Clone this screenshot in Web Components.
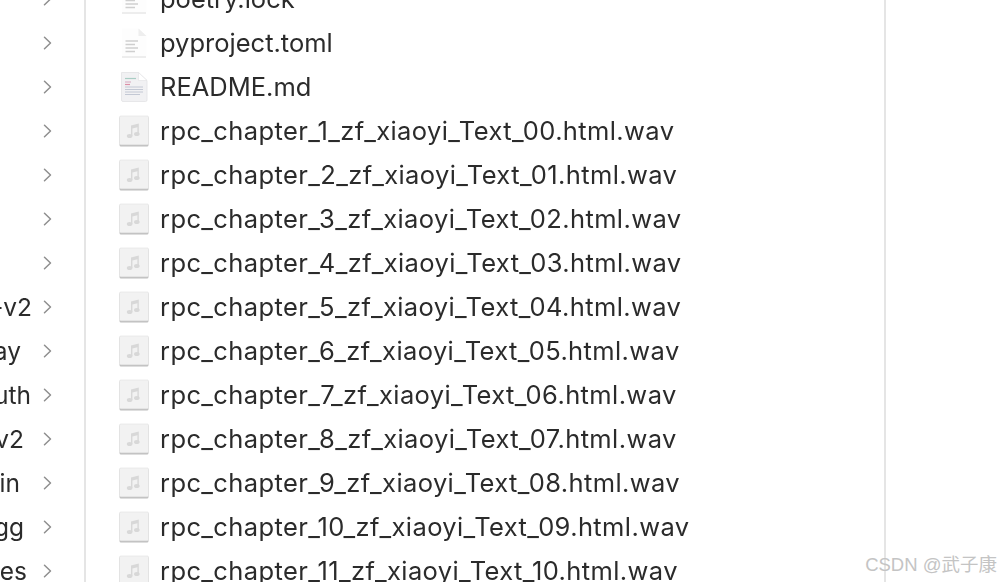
<!DOCTYPE html>
<html>
<head>
<meta charset="utf-8">
<title>Finder</title>
<style>
html,body{margin:0;padding:0;height:100%;background:#fff;overflow:hidden;}
</style>
</head>
<body>
<finder-window>
  <finder-column slot="left">
    <side-row></side-row><side-row></side-row><side-row></side-row><side-row></side-row>
    <side-row></side-row><side-row></side-row><side-row></side-row>
    <side-row label="-v2" end="32"></side-row>
    <side-row label="ay" end="21"></side-row>
    <side-row label="uth" end="31"></side-row>
    <side-row label="v2" end="24"></side-row>
    <side-row label="in" end="20"></side-row>
    <side-row label="gg" end="24"></side-row>
    <side-row label="es" end="27"></side-row>
  </finder-column>
  <finder-column slot="middle">
    <file-row icon="doc">poetry.lock</file-row>
    <file-row icon="doc">pyproject.toml</file-row>
    <file-row icon="readme">README.md</file-row>
    <file-row icon="audio">rpc_chapter_1_zf_xiaoyi_Text_00.html.wav</file-row>
    <file-row icon="audio">rpc_chapter_2_zf_xiaoyi_Text_01.html.wav</file-row>
    <file-row icon="audio">rpc_chapter_3_zf_xiaoyi_Text_02.html.wav</file-row>
    <file-row icon="audio">rpc_chapter_4_zf_xiaoyi_Text_03.html.wav</file-row>
    <file-row icon="audio">rpc_chapter_5_zf_xiaoyi_Text_04.html.wav</file-row>
    <file-row icon="audio">rpc_chapter_6_zf_xiaoyi_Text_05.html.wav</file-row>
    <file-row icon="audio">rpc_chapter_7_zf_xiaoyi_Text_06.html.wav</file-row>
    <file-row icon="audio">rpc_chapter_8_zf_xiaoyi_Text_07.html.wav</file-row>
    <file-row icon="audio">rpc_chapter_9_zf_xiaoyi_Text_08.html.wav</file-row>
    <file-row icon="audio">rpc_chapter_10_zf_xiaoyi_Text_09.html.wav</file-row>
    <file-row icon="audio">rpc_chapter_11_zf_xiaoyi_Text_10.html.wav</file-row>
  </finder-column>
  <finder-column slot="right"></finder-column>
  <water-mark slot="overlay">CSDN @武子康</water-mark>
</finder-window>

<script>
class FinderWindow extends HTMLElement {
    constructor() {
        super();
        this.attachShadow({mode: 'open'}).innerHTML = `<style>
:host{display:grid;grid-template-columns:86px 800px 1fr;position:relative;width:1000px;height:582px;overflow:hidden;
  background:#fff;color:#2b2b2b;font-family:Inter,"Liberation Sans","Noto Sans CJK SC",sans-serif;}
.col{min-width:0;box-sizing:border-box;border-right:2px solid #e5e5e5;}
.col.last{border:0;}
</style>
<div class="col"><slot name="left"></slot></div>
<div class="col"><slot name="middle"></slot></div>
<div class="col last"><slot name="right"></slot></div>
<slot name="overlay"></slot>`;
    }
}

class FinderColumn extends HTMLElement {
    constructor() {
        super();
        this.attachShadow({mode: 'open'}).innerHTML = `<style>
:host{display:flex;flex-direction:column;margin-top:-23px;}
</style><slot></slot>`;
    }
}

class SideRow extends HTMLElement {
    connectedCallback() {
        let label = this.getAttribute('label') || '';
        let end = this.getAttribute('end') || 0;
        this.attachShadow({mode: 'open'}).innerHTML = `<style>
:host{display:block;height:44px;position:relative;overflow:hidden;}
.t{position:absolute;right:calc(100% - ${end}px);top:0;line-height:44px;font-size:24.5px;white-space:nowrap;filter:blur(.25px);}
svg{position:absolute;left:43px;top:15px;}
</style>
<span class="t">${label}</span>
<svg width="9" height="14" viewBox="0 0 9 14" fill="none" stroke="#8f8f8f" stroke-width="1.5" stroke-linecap="round" stroke-linejoin="round"><path d="M1.500 1.200 7.500 7 1.500 12.800"/></svg>`;
    }
}

class FileIcon extends HTMLElement {
    connectedCallback() {
        let kind = this.getAttribute('kind');
        let svg = '';
        if (kind == 'audio') {
            svg = `<svg width="32" height="32" viewBox="0 0 32 32">
<rect x="1.500" y="1.500" width="29" height="30" rx="1.500" fill="#bdbdbd"/>
<rect x="1.500" y="1" width="29" height="28.800" rx="1.200" fill="#f2f2f2" stroke="#e0e0e0" stroke-width=".6"/>
<g fill="#d8d8d8"><ellipse cx="11.600" cy="21" rx="2.800" ry="2.100"/><ellipse cx="18.800" cy="19" rx="2.800" ry="2.100"/>
<path d="M13 10.600 20.800 8.600V19H19.400V12.300L14.400 13.600V21H13Z"/></g></svg>`;
        } else if (kind == 'readme') {
            svg = `<svg width="32" height="32" viewBox="0 0 32 32">
<path d="M3.500 1.500H20.500L29 9.500V29a1.500 1.500 0 0 1-1.500 1.500H5A1.500 1.500 0 0 1 3.500 29Z" fill="#f1f1f3" stroke="#e2e2e4" stroke-width=".8"/>
<path d="M20.500 1.500V9.500H29Z" fill="#fff" stroke="#e0e0e2" stroke-width=".6"/>
<path d="M7 7.500H18" stroke="#a9cdc4" stroke-width="1.200"/>
<path d="M7 11H13" stroke="#dcb4c8" stroke-width="1.200"/>
<path d="M7 13.500H12" stroke="#dc8fa6" stroke-width="1.200"/>
<path d="M7 16H25M7 18.500H25M7 21H25M7 23.500H22" stroke="#c3c8d4" stroke-width="1"/></svg>`;
        } else {
            svg = `<svg width="32" height="32" viewBox="0 0 32 32">
<path d="M4 1.500H20.500L28.500 9V29.500H4Z" fill="#fdfdfd"/>
<path d="M20.500 1.500V9H28.500Z" fill="#eeeeee"/>
<path d="M4 30H28" stroke="#dcdcdc" stroke-width="1"/>
<path d="M7.500 14H20M7.500 17.500H17M7.500 21H20M7.500 24.500H17" stroke="#cfcfcf" stroke-width="1.500"/></svg>`;
        }
        this.attachShadow({mode: 'open'}).innerHTML = `<style>
:host{display:block;width:32px;height:32px;flex:none;filter:blur(.4px);}
svg{display:block;}
</style>${svg}`;
    }
}

class FileRow extends HTMLElement {
    connectedCallback() {
        let icon = this.getAttribute('icon');
        let spacing = icon == 'audio' ? '.39px' : '0';
        this.attachShadow({mode: 'open'}).innerHTML = `<style>
:host{display:flex;align-items:center;gap:10px;height:44px;padding-left:32px;}
span{font-size:25.5px;letter-spacing:${spacing};margin-bottom:2px;white-space:nowrap;filter:blur(.25px);}
</style><file-icon kind="${icon}"></file-icon><span><slot></slot></span>`;
    }
}

class WaterMark extends HTMLElement {
    constructor() {
        super();
        this.attachShadow({mode: 'open'}).innerHTML = `<style>
:host{position:absolute;right:3px;bottom:6px;font:18.5px "Liberation Sans","Noto Sans CJK SC",sans-serif;color:#c4c4c4;white-space:nowrap;}
</style><slot></slot>`;
    }
}

customElements.define('finder-window', FinderWindow);
customElements.define('finder-column', FinderColumn);
customElements.define('side-row', SideRow);
customElements.define('file-icon', FileIcon);
customElements.define('file-row', FileRow);
customElements.define('water-mark', WaterMark);
</script>
</body>
</html>
